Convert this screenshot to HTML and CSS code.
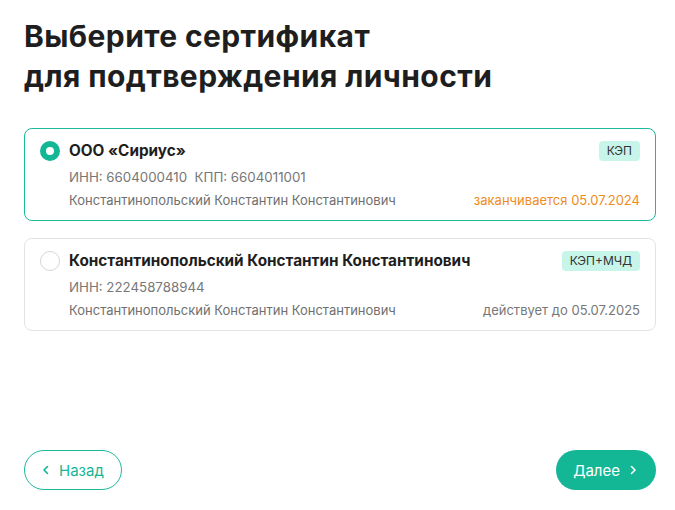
FILE: index.html
```html
<!DOCTYPE html>
<html lang="ru">
<head>
    <meta charset="UTF-8">
    <title>Выбор сертификата</title>
    <link rel="stylesheet" href="styles.css">
</head>
<body>
    <div class="page">
        <h1>Выберите сертификат<br>для подтверждения личности</h1>

        <!-- Список сертификатов -->
        <div class="cert-list">
            <div class="cert selected">
                <span class="radio"></span>
                <div class="cert-body">
                    <div class="cert-row">
                        <span class="cert-title">ООО «Сириус»</span>
                        <span class="badge">КЭП</span>
                    </div>
                    <div class="cert-info">ИНН: 6604000410&nbsp;&nbsp;КПП: 6604011001</div>
                    <div class="cert-row">
                        <span class="cert-owner">Константинопольский Константин Константинович</span>
                        <span class="cert-date warn">заканчивается 05.07.2024</span>
                    </div>
                </div>
            </div>

            <div class="cert">
                <span class="radio"></span>
                <div class="cert-body">
                    <div class="cert-row">
                        <span class="cert-title">Константинопольский Константин Константинович</span>
                        <span class="badge">КЭП+МЧД</span>
                    </div>
                    <div class="cert-info">ИНН: 222458788944</div>
                    <div class="cert-row">
                        <span class="cert-owner">Константинопольский Константин Константинович</span>
                        <span class="cert-date">действует до 05.07.2025</span>
                    </div>
                </div>
            </div>
        </div>

        <!-- Навигация -->
        <div class="actions">
            <button class="btn btn-back">
                <svg width="12" height="12" viewBox="0 0 12 12"><path d="M7.5 2.5 4 6l3.5 3.5" fill="none" stroke="currentColor" stroke-width="1.6" stroke-linecap="round" stroke-linejoin="round"/></svg>
                Назад
            </button>
            <button class="btn btn-next">
                Далее
                <svg width="12" height="12" viewBox="0 0 12 12"><path d="M4.5 2.5 8 6l-3.5 3.5" fill="none" stroke="currentColor" stroke-width="1.6" stroke-linecap="round" stroke-linejoin="round"/></svg>
            </button>
        </div>
    </div>
</body>
</html>
```

FILE: styles.css
```css
body {
    margin: 0;
    font-family: Inter, "Noto Sans", sans-serif;
    background: #ffffff;
    color: #222;
}
.page {
    width: 656px;
    height: 510px;
    box-sizing: border-box;
    padding: 16px 0 0 24px;
    display: flex;
    flex-direction: column;
}
h1 {
    margin: 0;
    font-size: 30px;
    line-height: 40px;
    font-weight: 700;
    letter-spacing: 0.4px;
    color: #1e1e1e;
}
.cert-list {
    margin-top: 32px;
    display: flex;
    flex-direction: column;
    gap: 17px;
}
.cert {
    display: flex;
    align-items: flex-start;
    gap: 9px;
    border: 1px solid #e3e3e3;
    border-radius: 8px;
    padding: 11px 15px 0 15px;
    height: 93px;
    box-sizing: border-box;
}
.cert.selected {
    border-color: #1cb99a;
}
.radio {
    flex: none;
    width: 20px;
    height: 20px;
    margin-top: 1px;
    box-sizing: border-box;
    border: 1px solid #d6d6d6;
    border-radius: 50%;
}
.selected .radio {
    border: 6px solid #13b796;
    background: #fff;
}
.cert-body {
    flex: 1;
}
.cert-row {
    display: flex;
    justify-content: space-between;
    align-items: center;
}
.cert-title {
    font-size: 15.3px;
    font-weight: 700;
    line-height: 22px;
    color: #1e1e1e;
}
.badge {
    background: #c8f5ea;
    color: #333;
    font-size: 12px;
    line-height: 20px;
    padding: 0 8px;
    border-radius: 4px;
}
.cert-info {
    margin-top: 5px;
    font-size: 13.3px;
    line-height: 20px;
    color: #777;
}
.cert-row + .cert-info + .cert-row {
    margin-top: 3px;
}
.cert-owner {
    font-size: 13px;
    line-height: 20px;
    color: #6f6f6f;
}
.cert-date {
    font-size: 13px;
    line-height: 20px;
    color: #777;
}
.cert-date.warn {
    color: #f08c1c;
}
.actions {
    margin-top: auto;
    margin-bottom: 20px;
    display: flex;
    justify-content: space-between;
}
.btn {
    height: 40px;
    border-radius: 20px;
    font-family: inherit;
    font-size: 15px;
    display: flex;
    align-items: center;
    gap: 7px;
    cursor: pointer;
}
.btn-back {
    background: #fff;
    border: 1px solid #1cb99a;
    color: #13b796;
    padding: 0 17px 0 15px;
}
.btn-next {
    background: #13b796;
    border: none;
    color: #fff;
    padding: 0 17px 0 17px;
}
```
